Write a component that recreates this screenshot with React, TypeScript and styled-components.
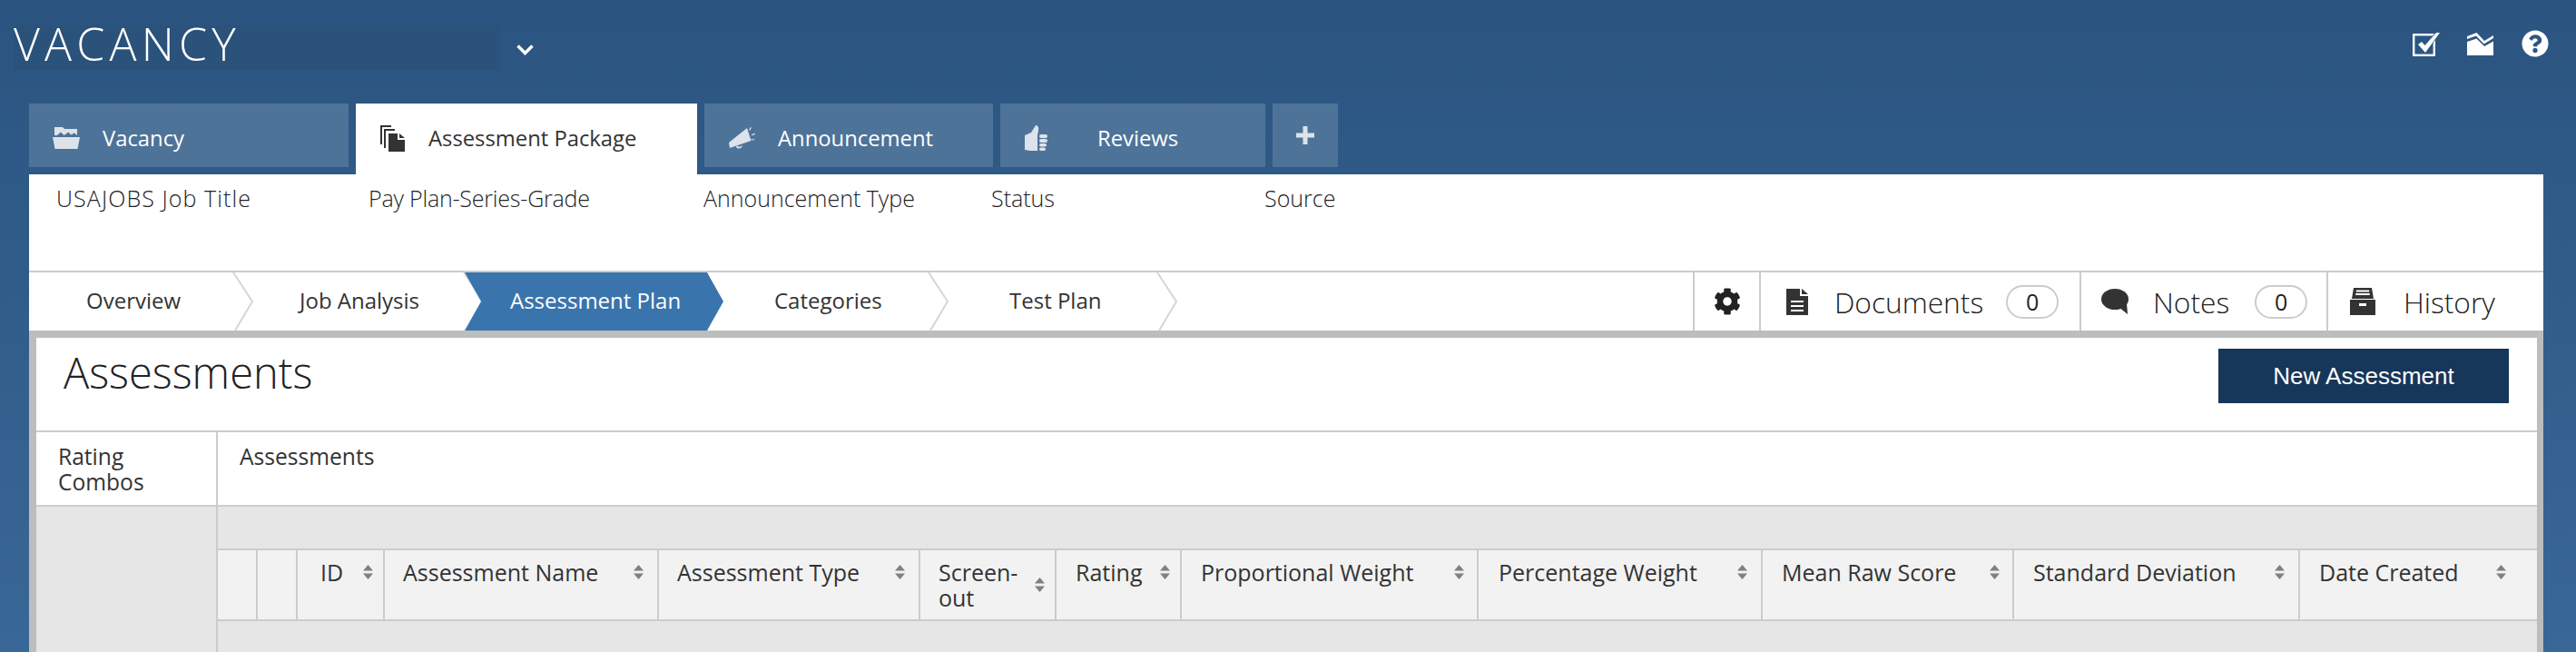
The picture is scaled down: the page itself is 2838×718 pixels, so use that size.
import React from "react";
import styled, { createGlobalStyle } from "styled-components";
import { FaCog, FaQuestionCircle } from "react-icons/fa";

const GlobalStyle = createGlobalStyle`
  html, body {
    margin: 0;
    padding: 0;
    height: 718px;
    overflow: hidden;
    font-family: "Open Sans", "Noto Sans", sans-serif;
    color: #333;
  }
  * { box-sizing: border-box; }
`;

const Page = styled.div`
  height: 718px;
  overflow: hidden;
  background: linear-gradient(#2b5480, #396797);
`;

const TopBar = styled.header`
  height: 114px;
  display: flex;
  align-items: flex-start;
  justify-content: space-between;
  padding: 27px 30px 0 15px;
`;

const TitleGroup = styled.div`
  display: flex;
  align-items: center;
`;

const TitleBox = styled.div`
  width: 536px;
  height: 51px;
  background: #2a527b;
  font-size: 50px;
  font-weight: 300;
  line-height: 42px;
  letter-spacing: 5.2px;
  color: #fff;
  white-space: nowrap;
`;

const TitleChevron = styled.svg`
  margin: 4px 0 0 18px;
`;

const TopIcons = styled.div`
  display: flex;
  align-items: flex-start;
  gap: 30px;
  padding-top: 6px;
  color: #fff;
`;

const TopIconSlot = styled.span<{ $top: number }>`
  display: block;
  height: 30px;
  margin-top: ${(p) => p.$top}px;
`;

const TabRow = styled.nav`
  height: 78px;
  display: flex;
  align-items: flex-start;
  gap: 8px;
  margin-left: 32px;
`;

const Tab = styled.div<{ $width: number; $active?: boolean; $gap: number; $inset: number }>`
  width: ${(p) => p.$width}px;
  height: ${(p) => (p.$active ? 78 : 70)}px;
  padding: 5px 0 ${(p) => (p.$active ? 8 : 0)}px ${(p) => p.$inset}px;
  display: flex;
  align-items: center;
  gap: ${(p) => p.$gap}px;
  background: ${(p) => (p.$active ? "#fff" : "#4e7399")};
  color: ${(p) => (p.$active ? "#333" : "#fff")};
  font-size: 23.8px;
  white-space: nowrap;
  svg {
    flex: none;
    margin-top: 1px;
  }
`;

const PlusTab = styled.div`
  width: 72px;
  height: 70px;
  display: flex;
  align-items: center;
  justify-content: center;
  background: #4e7399;
`;

const Panel = styled.main`
  width: 2770px;
  margin-left: 32px;
  background: #fff;
`;

const InfoRow = styled.div`
  height: 106px;
  display: grid;
  grid-template-columns: 344px 369px 317px 301px 1fr;
  padding-left: 30px;
`;

const InfoLabel = styled.div<{ $spacing?: number }>`
  font-size: 25px;
  font-weight: 300;
  line-height: 30px;
  padding-top: 11px;
  color: #222;
  letter-spacing: ${(p) => p.$spacing ?? 0}px;
`;

const StepBar = styled.div`
  height: 66px;
  display: flex;
  border-top: 2px solid #ccc;
`;

const Step = styled.div<{ $width: number; $indent: number; $active?: boolean }>`
  position: relative;
  width: ${(p) => p.$width + (p.$active ? 18 : 0)}px;
  margin-right: ${(p) => (p.$active ? -18 : 0)}px;
  padding: 0 0 3px ${(p) => p.$indent}px;
  display: flex;
  align-items: center;
  font-size: 24px;
  white-space: nowrap;
  color: ${(p) => (p.$active ? "#fff" : "#333")};
  z-index: ${(p) => (p.$active ? 1 : 0)};
  background: ${(p) => (p.$active ? "#3a74ad" : "transparent")};
  clip-path: ${(p) =>
    p.$active
      ? "polygon(0 0, calc(100% - 18px) 0, 100% 50%, calc(100% - 18px) 100%, 0 100%, 18px 50%)"
      : "none"};
`;

const StepChevron = styled.svg`
  position: absolute;
  top: 0;
  right: -22px;
`;

const Tools = styled.div`
  margin-left: auto;
  display: flex;
`;

const Tool = styled.div<{ $width: number; $inset: number }>`
  width: ${(p) => p.$width}px;
  padding-left: ${(p) => p.$inset}px;
  display: flex;
  align-items: center;
  border-left: 2px solid #ccc;
  font-size: 31.7px;
  font-weight: 300;
  color: #222;
  white-space: nowrap;
`;

const ToolLabel = styled.span<{ $left: number }>`
  margin-left: ${(p) => p.$left}px;
`;

const Badge = styled.span<{ $left: number }>`
  width: 58px;
  height: 37px;
  margin-left: ${(p) => p.$left}px;
  display: flex;
  align-items: center;
  justify-content: center;
  border: 2px solid #ccc;
  border-radius: 19px;
  font-size: 25px;
  font-weight: 400;
`;

const Content = styled.section`
  border-top: 8px solid #bdbdbd;
  border-left: 8px solid #bdbdbd;
  border-right: 7px solid #bdbdbd;
  height: 354px;
  overflow: hidden;
`;

const TitleRow = styled.div`
  height: 104px;
  display: flex;
  justify-content: space-between;
  padding: 12px 31px 0 30px;
  border-bottom: 2px solid #ccc;
`;

const Heading = styled.h1`
  margin: 0;
  font-size: 47px;
  font-weight: 300;
  line-height: 52px;
  color: #222;
`;

const NewButton = styled.button`
  width: 320px;
  height: 60px;
  border: none;
  background: #16365a;
  color: #fff;
  font-family: "Liberation Sans", Arial, sans-serif;
  font-size: 26px;
`;

const Columns = styled.div`
  display: grid;
  grid-template-columns: 200px 1fr;
  grid-template-rows: 82px 1fr;
  height: 242px;
`;

const ColumnHead = styled.div<{ $inset: number; $last?: boolean }>`
  padding: 13px 0 0 ${(p) => p.$inset}px;
  font-size: 24.6px;
  line-height: 28px;
  background: #fff;
  border-bottom: 2px solid #ccc;
  border-right: ${(p) => (p.$last ? "none" : "2px solid #ccc")};
`;

const SideFill = styled.div`
  background: #e6e6e6;
  border-right: 2px solid #ccc;
`;

const TableFill = styled.div`
  background: #e6e6e6;
  padding-top: 46px;
`;

const TableHead = styled.div`
  height: 80px;
  display: grid;
  grid-template-columns: 44px 44px 96px 302px 288px 150px 138px 327px 313px 277px 315px 261px;
  background: #f2f2f2;
  border-top: 2px solid #ccc;
  border-bottom: 2px solid #ccc;
`;

const HeadCell = styled.div<{ $inset?: number; $iconRight?: number }>`
  padding: 10px ${(p) => p.$iconRight ?? 0}px 0 ${(p) => p.$inset ?? 0}px;
  font-size: 25px;
  line-height: 28px;
  border-right: 2px solid #ccc;
  &:last-child {
    border-right: none;
  }
`;

const CellInner = styled.div`
  display: flex;
  align-items: center;
  justify-content: space-between;
`;

const columns: { label: React.ReactNode; inset: number; right: number }[] = [
  { label: "ID", inset: 25, right: 11.5 },
  { label: "Assessment Name", inset: 20, right: 15.5 },
  { label: "Assessment Type", inset: 20, right: 15.5 },
  { label: <>Screen-<br />out</>, inset: 20, right: 11.5 },
  { label: "Rating", inset: 21, right: 11.5 },
  { label: "Proportional Weight", inset: 21, right: 14.5 },
  { label: "Percentage Weight", inset: 22, right: 15.5 },
  { label: "Mean Raw Score", inset: 21, right: 14.5 },
  { label: "Standard Deviation", inset: 21, right: 15.5 },
  { label: "Date Created", inset: 21, right: 34.5 },
];

const steps = [
  { label: "Overview", width: 226, indent: 63 },
  { label: "Job Analysis", width: 254, indent: 72 },
  { label: "Assessment Plan", width: 267, indent: 50, active: true },
  { label: "Categories", width: 245, indent: 74 },
  { label: "Test Plan", width: 252, indent: 88 },
];

const SortIcon = () => (
  <svg width="11" height="16" viewBox="0 0 11 16" fill="#808080">
    <path d="M5.5 0 11 6.5H0z" />
    <path d="M0 9.5h11L5.5 16z" />
  </svg>
);

const CheckIcon = () => (
  <svg width="30" height="26" viewBox="0 0 30 26">
    <rect x="1.2" y="2.2" width="22.6" height="22.6" fill="none" stroke="#fff" strokeWidth="2.4" />
    <path d="M6 13l4-3 3.5 4L26 0h4L14 22z" fill="#fff" stroke="#2c5680" strokeWidth="1.6" paintOrder="stroke" />
  </svg>
);

const ChartIcon = () => (
  <svg width="30" height="25" viewBox="0 0 30 25" fill="#fff">
    <path d="M0 10l10.5-3.5L19 15l10-5.5V25H0z" />
    <path d="M0 4 10.5 0 19 9l10-6v3L18.6 12.6 10 3.4 0 7z" />
  </svg>
);

const FolderIcon = () => (
  <svg width="30" height="24" viewBox="0 0 30 24" fill="#dce3ea">
    <path d="M2 0h9l2 2h14v7l-3-2.5-4 2-2.5-3-5 3.5L9 5.5 5 9H2z" />
    <path d="M0 11h30l-2.5 13h-25z" />
  </svg>
);

const PackageIcon = () => (
  <svg width="27" height="29" viewBox="0 0 27 29" fill="#333">
    <path d="M0 0h12v2H2v19H0z" />
    <path d="M4 4h12v2H6v19H4z" />
    <path d="M9 9h10v7h8v13H9z" />
    <path d="M21 9l6 5h-6z" />
  </svg>
);

const BullhornIcon = () => (
  <svg width="29" height="24" viewBox="0 0 29 24" fill="#dce3ea">
    <path d="M0 17 20 1l4.5 14L1 23z" />
    <path d="M8 21c0 3.5 6 3.5 7-.5l-2 .5c-1 1-3 1-3-.5z" />
    <path d="M22 3l2-3 1 .8-2 3zM25 8l3.6-1.2.3 1.2-3.5 1.2zM24.6 13l3.6.4-.1 1.2-3.7-.5z" />
  </svg>
);

const ThumbIcon = () => (
  <svg width="25" height="28" viewBox="0 0 25 28" fill="#dce3ea">
    <path d="M0 11l7-3 5-8c3 0 3.5 3 3 6l-1 5v17H6l-6-1z" />
    <rect x="16" y="10" width="9" height="4" rx="2" />
    <rect x="16" y="15" width="9" height="4" rx="2" />
    <rect x="16" y="20" width="8" height="3.5" rx="1.7" />
    <rect x="16" y="24.5" width="7" height="3.5" rx="1.7" />
  </svg>
);

const DocIcon = () => (
  <svg width="24" height="29" viewBox="0 0 24 29">
    <path d="M0 0h15v8h9v21H0z" fill="#333" />
    <path d="M17 0l7 6h-7z" fill="#333" />
    <path d="M5 13h14v2H5zM5 18h14v2H5zM5 23h14v2H5z" fill="#fff" />
  </svg>
);

const BubbleIcon = () => (
  <svg width="30" height="28" viewBox="0 0 30 28" fill="#333">
    <ellipse cx="15" cy="11.5" rx="15" ry="11.5" />
    <path d="M19 20l10 8-1-12z" />
  </svg>
);

const ArchiveIcon = () => (
  <svg width="28" height="30" viewBox="0 0 28 30" fill="#333">
    <path d="M4 0h20l2 12H2zM7 2.5l-.4 2h14.8l-.4-2zM6.4 6l-.3 2h15.8l-.3-2z" fillRule="evenodd" />
    <path d="M0 13h28v17H0zM10 17v3h8v-3z" fillRule="evenodd" />
  </svg>
);

const ChevronLine = () => (
  <StepChevron width="24" height="64" viewBox="0 0 24 64" fill="none" stroke="#d6d6d6" strokeWidth="2">
    <path d="M1 0l21 32L3 64" />
  </StepChevron>
);

export default function App() {
  return (
    <Page>
      <GlobalStyle />
      <TopBar>
        <TitleGroup>
          <TitleBox>VACANCY</TitleBox>
          <TitleChevron width="19" height="12" viewBox="0 0 19 12" fill="none" stroke="#fff" strokeWidth="3.4">
            <path d="M1.5 1.5l8 8 8-8" />
          </TitleChevron>
        </TitleGroup>
        <TopIcons>
          <TopIconSlot $top={3}>
            <CheckIcon />
          </TopIconSlot>
          <TopIconSlot $top={3}>
            <ChartIcon />
          </TopIconSlot>
          <TopIconSlot $top={0}>
            <FaQuestionCircle size={30} />
          </TopIconSlot>
        </TopIcons>
      </TopBar>

      <TabRow>
        <Tab $width={352} $inset={26} $gap={25}>
          <FolderIcon />
          Vacancy
        </Tab>
        <Tab $width={376} $inset={27} $gap={26} $active>
          <PackageIcon />
          Assessment Package
        </Tab>
        <Tab $width={318} $inset={27} $gap={25}>
          <BullhornIcon />
          Announcement
        </Tab>
        <Tab $width={292} $inset={27} $gap={55}>
          <ThumbIcon />
          Reviews
        </Tab>
        <PlusTab>
          <svg width="20" height="20" viewBox="0 0 20 20" fill="#dce3ea">
            <path d="M7.5 0h5v7.5H20v5h-7.5V20h-5v-7.5H0v-5h7.5z" />
          </svg>
        </PlusTab>
      </TabRow>

      <Panel>
        <InfoRow>
          <InfoLabel $spacing={1.1}>USAJOBS Job Title</InfoLabel>
          <InfoLabel $spacing={-0.2}>Pay Plan-Series-Grade</InfoLabel>
          <InfoLabel>Announcement Type</InfoLabel>
          <InfoLabel>Status</InfoLabel>
          <InfoLabel>Source</InfoLabel>
        </InfoRow>

        <StepBar>
          {steps.map((s) => (
            <Step key={s.label} $width={s.width} $indent={s.indent} $active={s.active}>
              {s.label}
              {!s.active && <ChevronLine />}
            </Step>
          ))}
          <Tools>
            <Tool $width={73} $inset={21}>
              <FaCog size={30} />
            </Tool>
            <Tool $width={353} $inset={28}>
              <DocIcon />
              <ToolLabel $left={29}>Documents</ToolLabel>
              <Badge $left={25}>0</Badge>
            </Tool>
            <Tool $width={272} $inset={22}>
              <BubbleIcon />
              <ToolLabel $left={27}>Notes</ToolLabel>
              <Badge $left={28}>0</Badge>
            </Tool>
            <Tool $width={239} $inset={24}>
              <ArchiveIcon />
              <ToolLabel $left={31}>History</ToolLabel>
            </Tool>
          </Tools>
        </StepBar>

        <Content>
          <TitleRow>
            <Heading>Assessments</Heading>
            <NewButton>New Assessment</NewButton>
          </TitleRow>
          <Columns>
            <ColumnHead $inset={24}>
              Rating
              <br />
              Combos
            </ColumnHead>
            <ColumnHead $inset={24} $last>
              Assessments
            </ColumnHead>
            <SideFill />
            <TableFill>
              <TableHead>
                <HeadCell />
                <HeadCell />
                {columns.map((c, i) => (
                  <HeadCell key={i} $inset={c.inset} $iconRight={c.right}>
                    <CellInner>
                      <span>{c.label}</span>
                      <SortIcon />
                    </CellInner>
                  </HeadCell>
                ))}
              </TableHead>
            </TableFill>
          </Columns>
        </Content>
      </Panel>
    </Page>
  );
}
